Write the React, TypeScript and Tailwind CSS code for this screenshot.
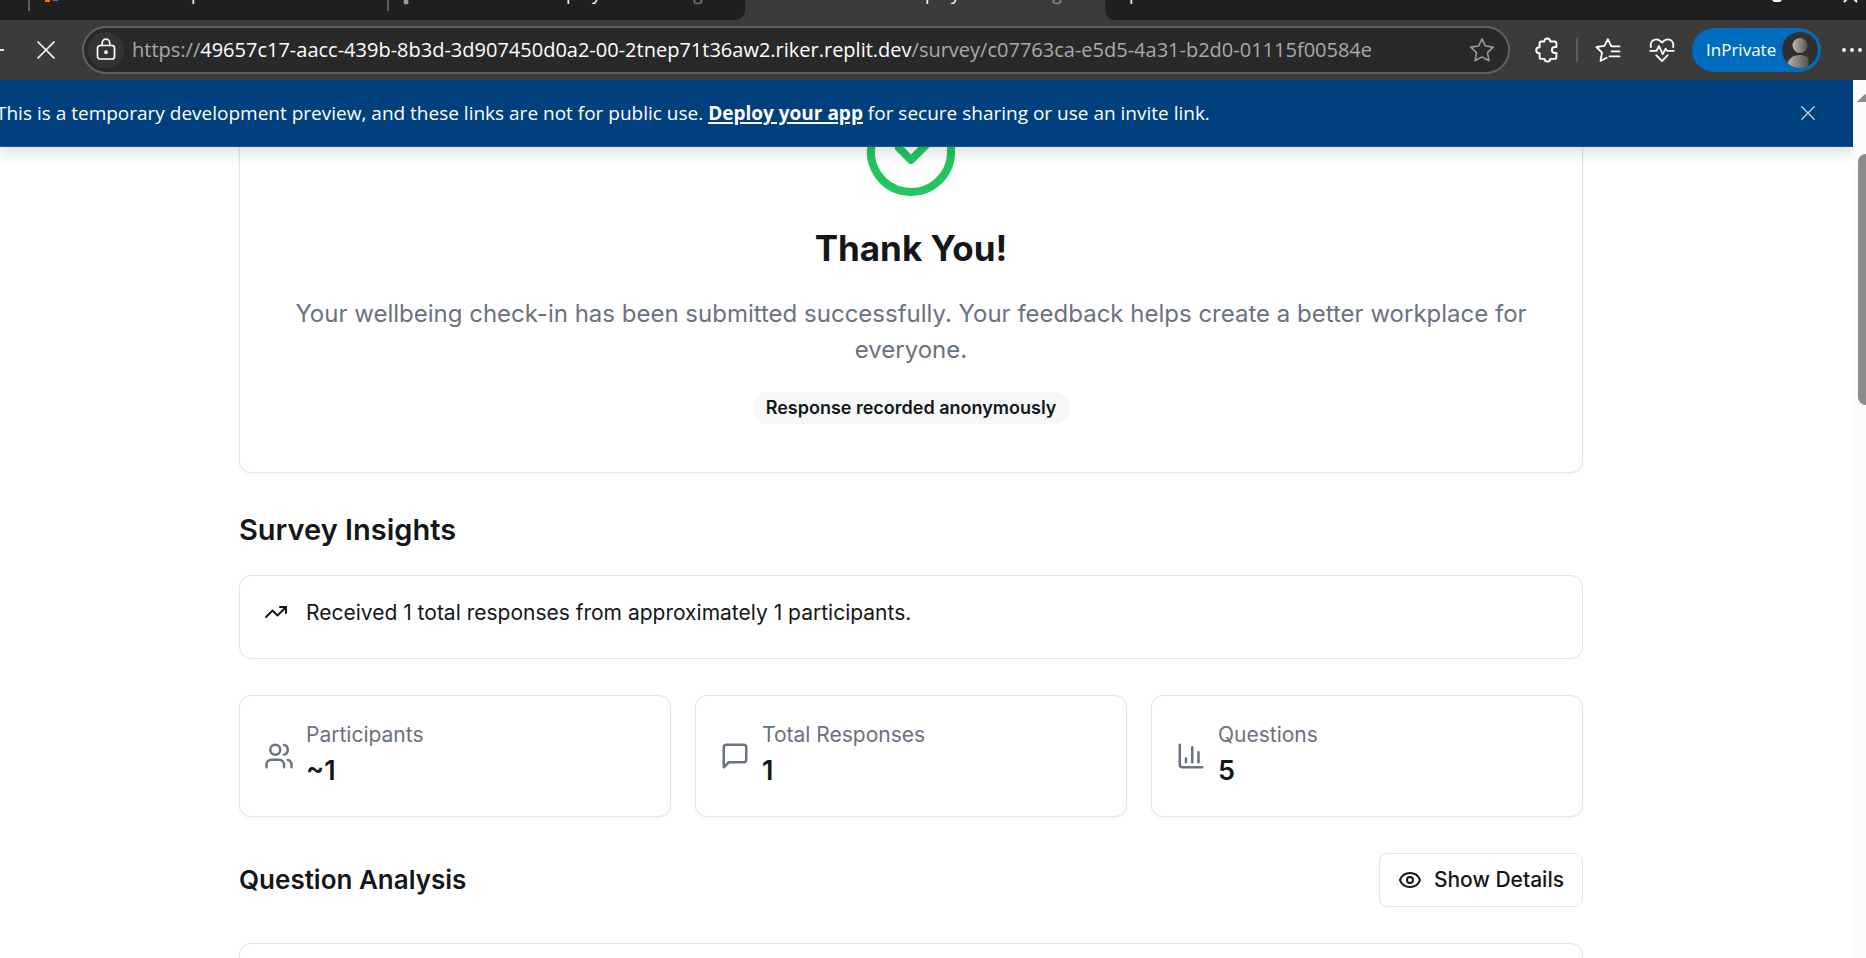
import React from 'react';
import { ChartColumn, Eye, TrendingUp } from 'lucide-react';

const stroke = {
  fill: 'none',
  stroke: 'currentColor',
  strokeLinecap: 'round' as const,
  strokeLinejoin: 'round' as const,
};

function CrossIcon({ className }: { className: string }) {
  return (
    <svg viewBox="0 0 18 18" className={className} {...stroke} strokeWidth="1.7" aria-hidden="true">
      <path d="M1 1l16 16M17 1L1 17" />
    </svg>
  );
}

function LockIcon() {
  return (
    <svg viewBox="0 0 24 24" className="size-6" {...stroke} strokeWidth="1.7" aria-hidden="true">
      <rect x="3.500" y="7.500" width="17" height="13.5" rx="2.5" />
      <path d="M8.200 7.500V5a3.800 3.800 0 0 1 7.600 0V7.500" />
      <circle cx="12" cy="14.2" r="1" fill="currentColor" />
    </svg>
  );
}

function StarIcon() {
  return (
    <svg viewBox="0 0 26 26" className="size-[26px]" {...stroke} strokeWidth="1.6" aria-hidden="true">
      <path d="M13 1.8l3.4 7.2 7.8 1.1-5.7 5.5 1.4 8.1-6.9-3.8-6.9 3.8 1.4-8.1-5.7-5.5L9.6 9z" />
    </svg>
  );
}

function PuzzleIcon() {
  return (
    <svg viewBox="0 0 24 26" className="h-[26px] w-6" {...stroke} strokeWidth="1.9" aria-hidden="true">
      <path d="M6.500 4.500H9.300C9.300 2.500 10.600 1.500 12.200 1.500S15.200 2.500 15.200 4.500H19.500A1.900 1.900 0 0 1 21.400 6.400V10H20.300C18 10 16.900 11.400 16.900 13S18 16 20.300 16H21.400V20A1.900 1.900 0 0 1 19.500 21.900H15.200C15.200 23.600 14 24.500 12.500 24.500S9.600 23.600 9.600 21.900H6.500A1.900 1.900 0 0 1 4.600 20V16.200C2.500 16.200 1.200 14.800 1.200 13.200S2.500 10.200 4.600 10.200V6.400A1.900 1.900 0 0 1 6.500 4.500Z" />
    </svg>
  );
}

function FavoritesIcon() {
  return (
    <svg viewBox="0 0 26 26" className="size-[26px]" {...stroke} strokeWidth="1.8" aria-hidden="true">
      <path d="M17 9.300h-0.600L12.800 2.200 9.500 8.800 1.500 10l5.500 5.600L5.500 24l6.200-3.200M16.500 9.300h8M16.500 14.400h8M14.500 19.400h10" />
    </svg>
  );
}

function HeartPulseIcon() {
  return (
    <svg viewBox="0 0 26 26" className="size-[26px]" {...stroke} strokeWidth="1.8" aria-hidden="true">
      <path d="M1.800 10.200C0.800 5.500 3.600 2.400 7.200 2.400c2.500 0 4.200 1.300 5.800 3.200 1.600-1.900 3.300-3.200 5.800-3.200 3.600 0 6.400 3.100 5.400 7.800" />
      <path d="M1.200 13.800H7.500L10 9l3.600 8.200 3-5.400 1.400 2H24.800" />
      <path d="M7.200 18.200l5.800 5.800 5.800-5.800" />
    </svg>
  );
}

function UsersIcon() {
  return (
    <svg viewBox="0 0 24 24" className="size-[30px]" {...stroke} strokeWidth="2" aria-hidden="true">
      <path d="M16 21v-2a4 4 0 0 0-4-4H6a4 4 0 0 0-4 4v2" />
      <circle cx="9" cy="7" r="4" />
      <path d="M22 21v-2a4 4 0 0 0-3-3.870M16 3.130a4 4 0 0 1 0 7.750" />
    </svg>
  );
}

function MessageIcon() {
  return (
    <svg viewBox="0 0 24 24" className="size-[30px]" {...stroke} strokeWidth="2" aria-hidden="true">
      <path d="M21 15a2 2 0 0 1-2 2H7l-4 4V5a2 2 0 0 1 2-2h14a2 2 0 0 1 2 2z" />
    </svg>
  );
}

function Avatar() {
  return (
    <svg viewBox="0 0 36 36" className="size-9" aria-hidden="true">
      <defs>
        <linearGradient id="person" x1="0" x2="1" y1="0" y2="0">
          <stop offset="0" stopColor="#bdb9b5" />
          <stop offset="1" stopColor="#55524f" />
        </linearGradient>
        <clipPath id="disc">
          <circle cx="18" cy="18" r="18" />
        </clipPath>
      </defs>
      <circle cx="18" cy="18" r="18" fill="#32302e" />
      <g clipPath="url(#disc)" fill="url(#person)">
        <circle cx="18" cy="13.500" r="7.500" />
        <path d="M4 36C5.500 26.500 11 23 18 23c3.500 0 6.500 1 8.500 3v10z" />
      </g>
    </svg>
  );
}

function TabStrip() {
  return (
    <div className="flex h-5 shrink-0 overflow-hidden bg-[#3b3b3b] text-[18px] leading-5 text-white">
      <div className="flex w-[30px] shrink-0 justify-between bg-[#202020]">
        <span className="-mt-[17px] -ml-2">y</span>
        <span className="h-[11px] w-0.5 bg-[#5c5c5c]" />
      </div>
      <div className="flex w-[359px] shrink-0 justify-between bg-[#202020]">
        <div className="flex">
          <svg viewBox="0 0 14 3" className="ml-[14px] h-[3px] w-[14px]" aria-hidden="true">
            <path d="M1 0h5v2H1z" fill="#ff6a13" />
            <path d="M9 0h5v1H9z" fill="#7467a8" />
          </svg>
          <span className="-mt-[17px] ml-[133px]">p</span>
        </div>
        <span className="h-[11px] w-0.5 bg-[#5c5c5c]" />
      </div>
      <div className="flex w-[356px] shrink-0 rounded-br-[10px] bg-[#202020]">
        <svg viewBox="0 0 6 5" className="ml-[14px] h-[5px] w-1.5" aria-hidden="true">
          <circle cx="3" cy="2" r="2.500" fill="#9a9a9a" />
        </svg>
        <span className="-mt-[17px] ml-[157px]">p</span>
        <span className="-mt-[17px] ml-[15px]">y</span>
        <span className="-mt-[17px] ml-[92px] text-[#7d7d7d]">g</span>
      </div>
      <div className="flex w-[360px] shrink-0 bg-[#3b3b3b]">
        <span className="-mt-[17px] ml-[180px]">p</span>
        <span className="-mt-[17px] ml-[15px]">y</span>
        <span className="-mt-[17px] ml-[92px] text-[#8d8d8d]">g</span>
      </div>
      <div className="flex flex-1 justify-between rounded-bl-[10px] bg-[#202020]">
        <span className="-mt-[17px] ml-6">p</span>
        <svg viewBox="0 0 90 3" className="mr-2 h-[3px] w-[90px]" aria-hidden="true">
          <path d="M4 0h10l-2 2H6z" fill="#fff" />
          <path d="M76 2l3-3M89 2l-3-3" stroke="#fff" strokeWidth="2" />
        </svg>
      </div>
    </div>
  );
}

function Toolbar() {
  return (
    <div className="flex h-[60px] shrink-0 items-center overflow-hidden bg-[#3b3b3b] text-white">
      <button aria-label="Back" className="w-[37px] shrink-0">
        <svg viewBox="0 0 4 2" className="h-0.5 w-1" aria-hidden="true">
          <path d="M0 1h4" stroke="#e5e5e5" strokeWidth="2" />
        </svg>
      </button>
      <button aria-label="Stop loading">
        <CrossIcon className="size-[18px]" />
      </button>
      <div className="ml-[27px] flex h-12 min-w-0 flex-1 items-center rounded-full border-2 border-[#606060] bg-[#292929] pr-[13px] pl-1">
        <button aria-label="View site information" className="flex size-9 shrink-0 items-center justify-center rounded-full bg-[#343434]">
          <LockIcon />
        </button>
        <div role="textbox" aria-label="Address" className="ml-2 min-w-0 flex-1 truncate text-[20px] leading-7 text-[#a9a9a9]">
          https://<span className="text-white">49657c17-aacc-439b-8b3d-3d907450d0a2-00-2tnep71t36aw2.riker.replit.dev</span>/survey/c07763ca-e5d5-4a31-b2d0-01115f00584e
        </div>
        <button aria-label="Add to favorites" className="shrink-0 text-[#9a9a9a]">
          <StarIcon />
        </button>
      </div>
      <div className="flex shrink-0 items-center pr-px">
        <button aria-label="Extensions" className="ml-[25px]">
          <PuzzleIcon />
        </button>
        <span className="ml-[17px] h-6 w-0.5 bg-[#5e5e5e]" />
        <button aria-label="Favorites" className="ml-[17px]">
          <FavoritesIcon />
        </button>
        <button aria-label="Browser essentials" className="ml-7">
          <HeartPulseIcon />
        </button>
        <button className="ml-[17px] flex h-11 w-[129px] items-center justify-between rounded-full bg-[#006cbe] pr-[3px] pl-[14px] text-[17px]">
          InPrivate
          <Avatar />
        </button>
        <button aria-label="Settings and more" className="ml-5">
          <svg viewBox="0 0 24 6" className="h-1.5 w-6" fill="#fff" aria-hidden="true">
            <circle cx="3" cy="3" r="1.900" />
            <circle cx="11" cy="3" r="1.900" />
            <circle cx="19" cy="3" r="1.900" />
          </svg>
        </button>
      </div>
    </div>
  );
}

function PreviewBanner() {
  return (
    <div className="relative z-10 flex h-[67px] shrink-0 items-center justify-between border-b border-[#1a5596] bg-[#00407f] pr-[38px] text-[19px] text-white shadow-[0_4px_16px_rgba(0,0,0,0.16)]">
      <p className="-ml-1 whitespace-nowrap">
        This is a temporary development preview, and these links are not for public use.{' '}
        <a href="#deploy" className="font-bold underline decoration-2 underline-offset-2">
          Deploy your app
        </a>{' '}
        for secure sharing or use an invite link.
      </p>
      <button aria-label="Dismiss" className="text-[#c3d2e2]">
        <CrossIcon className="size-[14px]" />
      </button>
    </div>
  );
}

function Stat({ icon, label, value }: { icon: React.ReactNode; label: string; value: string }) {
  return (
    <div className="flex items-center gap-3 rounded-xl border border-[#e4e5e7] bg-white p-6 shadow-[0_1px_3px_rgba(0,0,0,0.05)]">
      <span className="text-[#6b7280]">{icon}</span>
      <div>
        <p className="text-[21px] leading-[30px] text-[#6b7280]">{label}</p>
        <p className="text-[27px] leading-[42px] font-semibold">{value}</p>
      </div>
    </div>
  );
}

function SurveyResult() {
  return (
    <div className="-mt-[92px] pr-[31px] font-[Inter,sans-serif] text-[#14171a]">
      <main className="mx-auto flex max-w-[1344px] flex-col">
        <section className="flex flex-col items-center rounded-xl border border-[#e4e5e7] bg-white p-12 text-center shadow-[0_1px_3px_rgba(0,0,0,0.05)]">
          <svg viewBox="0 0 24 24" className="size-24 text-[#22c55e]" {...stroke} strokeWidth="2" aria-hidden="true">
            <path d="M22 11.080V12a10 10 0 1 1-5.930-9.140" />
            <path d="m9 11 3 3L22 4" />
          </svg>
          <h1 className="mt-6 text-[35px] leading-[48px] font-bold">Thank You!</h1>
          <p className="mt-6 text-[24px] leading-9 text-[#6b7280]">
            Your wellbeing check-in has been submitted successfully. Your feedback helps create a better workplace for everyone.
          </p>
          <span className="mt-6 rounded-full bg-[#f5f7f8] px-3.5 text-[18px] leading-8 font-semibold">Response recorded anonymously</span>
        </section>

        <h2 className="mt-9 text-[29px] leading-[42px] font-semibold">Survey Insights</h2>
        <div role="status" className="mt-6 flex items-start gap-[18px] rounded-xl border border-[#e4e5e7] px-6 pt-6 pb-8">
          <TrendingUp className="size-6" />
          <p className="text-[21px] leading-[26px]">Received 1 total responses from approximately 1 participants.</p>
        </div>

        <div className="mt-9 grid grid-cols-3 gap-6">
          <Stat icon={<UsersIcon />} label="Participants" value="~1" />
          <Stat icon={<MessageIcon />} label="Total Responses" value="1" />
          <Stat icon={<ChartColumn className="size-[30px]" />} label="Questions" value="5" />
        </div>

        <div className="mt-9 flex items-center justify-between">
          <h2 className="text-[26px] leading-[42px] font-semibold">Question Analysis</h2>
          <button className="flex h-[54px] items-center gap-3 rounded-[9px] border border-[#e4e5e7] bg-white px-[18px] text-[21px] font-medium">
            <Eye className="size-6" />
            Show Details
          </button>
        </div>
        <section className="mt-9 h-40 rounded-xl border border-[#e4e5e7] bg-white shadow-[0_1px_3px_rgba(0,0,0,0.05)]" />
      </main>
    </div>
  );
}

export default function App() {
  return (
    <div className="flex h-screen flex-col overflow-hidden bg-white font-['Open_Sans','Noto_Sans',sans-serif]">
      <TabStrip />
      <Toolbar />
      <div className="flex min-h-0 flex-1">
        <div className="flex min-w-0 flex-1 flex-col overflow-hidden">
          <PreviewBanner />
          <SurveyResult />
        </div>
        <div className="flex w-[13px] shrink-0 flex-col items-start overflow-hidden bg-[#fcfcfc]" aria-hidden="true">
          <svg viewBox="0 0 16 8" className="mt-[14px] ml-1 h-2 w-4 shrink-0">
            <path d="M8 0l8 8H0z" fill="#8b8b8b" />
          </svg>
          <div className="mt-[52px] ml-[5px] h-[251px] w-4 shrink-0 rounded-lg bg-[#8b8b8b]" />
        </div>
      </div>
    </div>
  );
}
